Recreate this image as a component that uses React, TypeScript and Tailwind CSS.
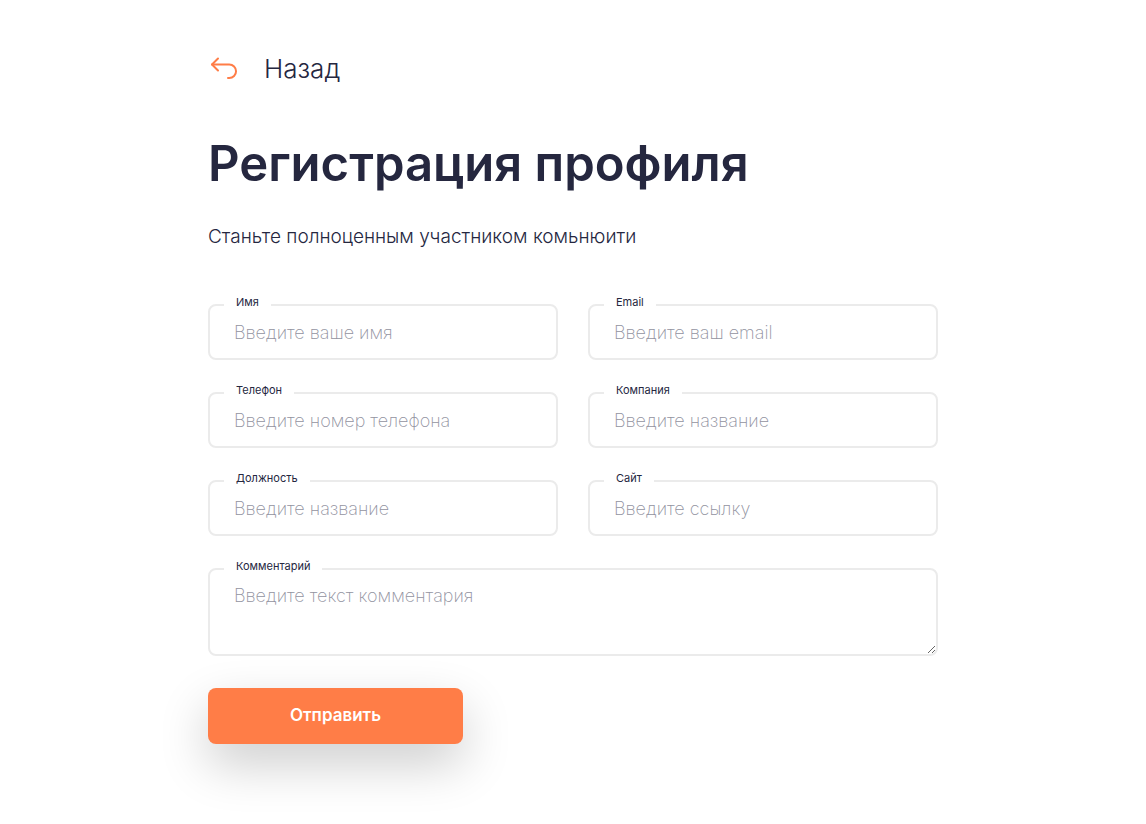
import clsx from "clsx";

type FieldProps = {
  id: string;
  label: string;
  placeholder: string;
  type?: string;
  multiline?: boolean;
};

const fields: FieldProps[] = [
  { id: "name", label: "Имя", placeholder: "Введите ваше имя" },
  { id: "email", label: "Email", placeholder: "Введите ваш email", type: "email" },
  { id: "phone", label: "Телефон", placeholder: "Введите номер телефона", type: "tel" },
  { id: "company", label: "Компания", placeholder: "Введите название" },
  { id: "position", label: "Должность", placeholder: "Введите название" },
  { id: "site", label: "Сайт", placeholder: "Введите ссылку", type: "url" },
  {
    id: "comment",
    label: "Комментарий",
    placeholder: "Введите текст комментария",
    multiline: true,
  },
];

const control =
  "block w-full rounded-lg border-2 border-[#ebebeb] bg-white px-6 text-lg leading-6 font-light text-[#25273f] outline-none placeholder:font-extralight placeholder:text-[#92939f] focus:border-[#ff7d47]";

const Field = ({ id, label, placeholder, type = "text", multiline }: FieldProps) => (
  <div className={clsx("relative", multiline && "sm:col-span-2")}>
    {/* Label sits over the top border */}
    <label
      htmlFor={id}
      className="absolute -top-2.5 left-4 bg-white px-3 text-[11px] leading-4 text-[#25273f]"
    >
      {label}
    </label>
    {multiline ? (
      <textarea
        id={id}
        name={id}
        placeholder={placeholder}
        className={clsx(control, "h-22 resize py-3.5")}
      />
    ) : (
      <input
        id={id}
        name={id}
        type={type}
        placeholder={placeholder}
        className={clsx(control, "h-14")}
      />
    )}
  </div>
);

const BackIcon = () => (
  <svg
    width="30"
    height="24"
    viewBox="0 0 30 24"
    fill="none"
    stroke="#ff7d47"
    strokeWidth="2"
    strokeLinecap="round"
    strokeLinejoin="round"
    aria-hidden="true"
  >
    <path d="M8 1.5 2 7.5l6 6" />
    <path d="M2 7.5H19.3a6.75 6.75 0 0 1 0 13.5H18" />
  </svg>
);

const App = () => {
  return (
    <main className="min-h-screen bg-white px-6 pt-12 pb-20 font-['Inter','Noto_Sans',sans-serif] text-[#25273f]">
      <div className="mx-auto max-w-[730px]">
        <a href="#back" className="inline-flex items-center gap-6 pl-0.5 text-[26px] leading-[42px] font-light">
          <BackIcon />
          Назад
        </a>

        <h1 className="mt-10 text-[49px] leading-[68px] font-semibold">
          Регистрация профиля
        </h1>
        <p className="mt-6 text-[19px] leading-[30px] font-light">
          Станьте полноценным участником комьнюити
        </p>

        <form
          className="mt-13 grid gap-x-[30px] gap-y-8 sm:grid-cols-2"
          onSubmit={(e) => e.preventDefault()}
        >
          {fields.map((field) => (
            <Field key={field.id} {...field} />
          ))}
          <button
            type="submit"
            className="h-14 w-[255px] cursor-pointer rounded-lg bg-[#ff7d47] text-[17px] font-semibold text-white shadow-[0_20px_50px_rgba(0,0,0,0.2)]"
          >
            Отправить
          </button>
        </form>
      </div>
    </main>
  );
};

export default App;
